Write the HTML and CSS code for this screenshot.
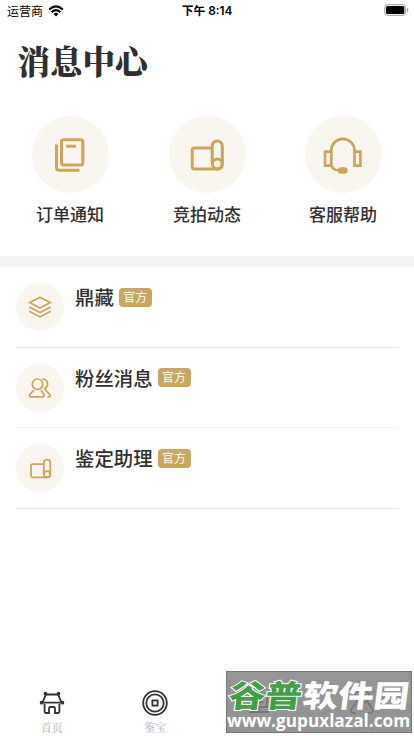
FILE: index.html
```html
<!DOCTYPE html>
<html lang="zh-CN">
<head>
<meta charset="utf-8">
<title>消息中心</title>
<link rel="stylesheet" href="styles.css">
</head>
<body>
<svg class="defs" width="0" height="0" aria-hidden="true">
  <symbol id="scroll" viewBox="0 0 36 36">
    <path d="M23.2 11H5.7Q3.2 11 3.2 13.5V29.5Q3.2 32 5.7 32H28.3Q33.3 32 33.3 27V9A5.05 5.05 0 0 0 23.2 9V27"/>
    <circle cx="28.3" cy="27" r="4.9"/>
  </symbol>
</svg>
<div class="screen">
  <header class="status">
    <div class="carrier"><span>运营商</span>
      <svg width="16" height="12" viewBox="0 0 16 12"><g fill="none" stroke="#000" stroke-width="2.2"><path d="M1.2 4.5Q8-1.8 14.8 4.5"/><path d="M3.7 7.2Q8 3.2 12.3 7.2"/></g><path d="M5.6 8.9Q8 6.8 10.4 8.9L8 11.4z"/></svg>
    </div>
    <div class="time">下午 8:14</div>
    <svg class="battery" width="25" height="12" viewBox="0 0 25 12"><rect x=".7" y=".7" width="21" height="10.6" rx="3" fill="none" stroke="#999"/><rect x="2" y="2" width="18.3" height="8" rx="1.5"/><path d="M23.2 4v4q1.2-.6 1.2-2t-1.2-2" fill="#888"/></svg>
  </header>
  <h1>消息中心</h1>
  <nav class="shortcuts">
    <a class="shortcut"><span class="disc">
      <svg class="icon" width="36" height="36" viewBox="0 0 36 36"><rect x="9.5" y="2.7" width="21.3" height="25.3" rx="2"/><path d="M14.2 9.2h9.6M4.5 7.5V30.2q0 3 3 3h20"/></svg>
    </span><span>订单通知</span></a>
    <a class="shortcut"><span class="disc"><svg class="icon" width="36" height="36"><use href="#scroll"/></svg></span><span>竞拍动态</span></a>
    <a class="shortcut"><span class="disc">
      <svg class="icon headset" width="40" height="40" viewBox="0 0 40 40"><path d="M8.3 16.6H2.1V30.7H8.3ZM31.5 16.6H37.4V30.7H31.5ZM8.3 17V15.5a11.6 11.6 0 0 1 23.2 0V17M8.5 31Q10.5 35.3 16 35.5"/><rect class="solid" x="14.8" y="32.2" width="9.8" height="6.5" rx="3"/></svg>
    </span><span>客服帮助</span></a>
  </nav>
  <main class="messages">
    <article class="message"><span class="avatar">
      <svg class="icon thin" width="24" height="24" viewBox="0 0 24 24"><path d="M12 2.2 22.3 7.5 12 13 1.7 7.5ZM1.3 12 12 17.5 22.7 12M1.3 16.3 12 21.9 22.7 16.3"/></svg>
    </span><h2>鼎藏</h2><span class="badge">官方</span></article>
    <article class="message light"><span class="avatar">
      <svg class="icon thin" width="24" height="24" viewBox="0 0 24 24"><circle cx="9.5" cy="8.2" r="5.2"/><path d="M6 14 1.7 18.8Q.8 20.8 3 20.8H15.2Q17.2 20.5 16 18.8L13 14M14.3 3.1Q19.6 3.2 19.6 8 19.6 11.3 16.6 13L21.8 18.7Q23 20.8 20.6 20.8H19.2"/></svg>
    </span><h2>粉丝消息</h2><span class="badge">官方</span></article>
    <article class="message"><span class="avatar"><svg class="icon small-scroll" width="23" height="23"><use href="#scroll"/></svg></span><h2>鉴定助理</h2><span class="badge">官方</span></article>
  </main>
  <footer class="tabs">
    <a class="tab"><svg width="26" height="26" viewBox="0 0 26 26"><path d="M7 4.5H19L22.5 12.7H3.5ZM5.6 14V21.5Q5.6 23 7 23H10V18.5Q10 17 11.5 17H14.5Q16 17 16 18.5V23H19Q20.4 23 20.4 21.5V14"/><circle cx="6.5" cy="3.7" r="1"/><circle cx="19.5" cy="3.7" r="1"/><circle cx="2.6" cy="12.7" r="1"/><circle cx="23.4" cy="12.7" r="1"/></svg><span>首页</span></a>
    <a class="tab"><svg width="26" height="26" viewBox="0 0 26 26"><circle cx="13" cy="13" r="11.8"/><circle cx="13" cy="13" r="8.7"/><rect x="10.4" y="10.4" width="5.2" height="5.2"/></svg><span>鉴宝</span></a>
    <a class="tab"><svg width="26" height="26" viewBox="0 0 26 26"><path d="M5 4H21V17H5ZM9 8H17M9 12H17M13 17V22M3 22H23"/></svg><span>消息</span></a>
    <a class="tab"><svg width="26" height="26" viewBox="0 0 26 26"><path d="M8 11A7 7 0 1 1 18 11L24 20Q24 24 19 23M8 11 2 20Q2 24 7 23M8 11Q13 15 18 11"/></svg><span>我的</span></a>
  </footer>
  <div class="watermark">
    <svg width="184" height="60" viewBox="0 0 184 60">
      <g transform="translate(4 0) skewX(-7)">
        <text class="mark green" x="1" y="34.5" textLength="73" lengthAdjust="spacingAndGlyphs">谷普</text>
        <text class="mark white" x="75" y="34.5" textLength="106" lengthAdjust="spacingAndGlyphs">软件园</text>
      </g>
      <text class="site" x="0" y="55" textLength="183" lengthAdjust="spacingAndGlyphs">www.gupuxlazal.com</text>
    </svg>
  </div>
</div>
</body>
</html>
```
FILE: styles.css
```css
* { box-sizing: border-box; }
body { margin: 0; background: #fff; color: #303030; font-family: "Noto Sans CJK SC", sans-serif; }
.defs { display: block; height: 0; }
.screen { position: relative; width: 414px; height: 736px; overflow: hidden; display: flex; flex-direction: column; }
.status { height: 22px; padding: 0 5px 0 7px; display: grid; grid-template-columns: 1fr auto 1fr; align-items: center; font-size: 12px; line-height: 20px; color: #000; }
.carrier { display: flex; align-items: center; gap: 5px; }
.time { padding-right: 2px; font-family: Inter, "Noto Sans CJK SC", sans-serif; font-size: 11.8px; font-weight: 600; }
.battery { justify-self: end; margin-bottom: 2px; }
h1 { margin: 0; padding: 14px 0 0 17.5px; height: 94px; font: 900 32.5px/48px "Noto Serif CJK SC", "Noto Serif SC", "Noto Sans CJK SC", serif; }
.shortcuts { height: 140px; padding: 0 3px 0 2px; display: flex; justify-content: space-between; }
.shortcut { width: 136px; display: flex; flex-direction: column; align-items: center; gap: 8px; font-size: 17px; line-height: 25px; font-weight: 500; }
.shortcut:nth-child(2) { margin-left: 1px; }
.disc { width: 77px; height: 77px; border-radius: 50%; background: #f9f6ef; display: flex; align-items: center; justify-content: center; }
.icon { fill: none; stroke: #cba657; stroke-width: 3; }
.headset { stroke-width: 2.7; }
.thin { stroke-width: 1.7; }
.small-scroll { stroke-width: 2.8; }
.solid { fill: #cba657; stroke: none; }
.messages { border-top: 11px solid #f4f4f4; padding: 0 15px 0 16px; flex: 1; }
.message { height: 80.5px; padding-top: 16px; border-bottom: 1px solid #e5e5e5; display: flex; align-items: flex-start; }
.light { border-color: #f4f4f4; }
.avatar { width: 48px; height: 48px; margin-right: 11px; border-radius: 50%; background: #f9f6ef; display: flex; align-items: center; justify-content: center; }
h2 { margin: 0 5px 0 0; font-size: 19.4px; line-height: 27px; font-weight: 500; }
.badge { width: 33px; height: 19px; margin-top: 4.5px; border-radius: 4px; background: #c9a75d; color: #fff; font-size: 12px; line-height: 18px; font-weight: 350; text-align: center; }
.tabs { height: 46px; display: flex; }
.tab { flex: 1; display: flex; flex-direction: column; align-items: center; gap: 3px; color: #aaa; font: 11px/16px "Noto Serif CJK SC", "Noto Serif SC", "Noto Sans CJK SC", serif; }
.tab svg { fill: none; stroke: #333; stroke-width: 1.8; }
.watermark { position: absolute; left: 226px; top: 671px; width: 186px; height: 62px; background: rgba(132, 132, 132, .86); border: 1px solid #777; }
.watermark svg { display: block; }
.mark { font: 900 30.5px "Noto Sans CJK SC", sans-serif; fill: #fff; }
.green { fill: #43a047; stroke: #fff; stroke-width: 2px; paint-order: stroke; }
.site { font: bold 17.5px "Open Sans", sans-serif; fill: #fff; }
```
